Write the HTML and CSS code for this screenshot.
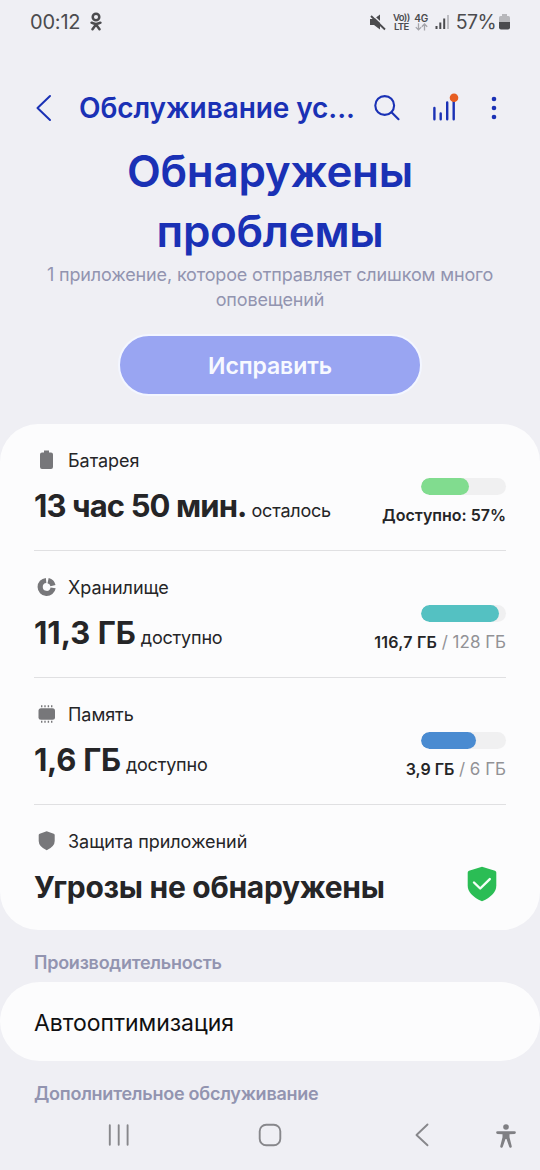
FILE: index.html
```
<!DOCTYPE html>
<html lang="ru">
<head>
<meta charset="utf-8">
<meta name="viewport" content="width=device-width">
<title>Обслуживание устройства</title>
<link rel="stylesheet" href="styles.css">
</head>
<body>
<div class="screen">
  <div class="status">
    <span class="clock">00:12</span>
    <svg class="ok" width="12" height="20" viewBox="0 0 12 20" fill="none" stroke="#4b4b4e" stroke-linecap="round"><circle cx="6" cy="5" r="3.3" stroke-width="2.5"/><path d="M1.6 10.7Q6 13.3 10.4 10.7M6 12.6L2.5 17.3M6 12.6l3.5 4.7" stroke-width="2.5"/></svg>
    <span class="spring"></span>
    <svg class="mute" width="16" height="17" viewBox="0 0 16 17"><path d="M0 5h4l6-4.500v15l-6-4.500H0z" fill="#4b4b4e"/><path d="M2 .5l14 13" stroke="#efeff4" stroke-width="1.500"/><path d="M1 2l14 13.500" stroke="#4b4b4e" stroke-width="1.900"/></svg>
    <span class="net volte"><b>Vo))</b><b>LTE</b></span>
    <span class="net fourg"><b>4G</b><svg width="13" height="8" viewBox="0 0 13 8" fill="none" stroke="#a5a5aa" stroke-width="1.3"><path d="M3.5.3v6.5M.8 4.1l2.7 2.8 2.7-2.8M9.5 7.5V1M6.8 3.8L9.5 1l2.7 2.8"/></svg></span>
    <svg class="signal" width="15" height="16" viewBox="0 0 15 16"><path d="M.5 12h2v3h-2zM4.3 8.500h2V15h-2zM8.200 4.500h2V15h-2z" fill="#4b4b4e"/><path d="M12 1h2v14h-2z" fill="#bdbdc2"/></svg>
    <span class="pct">57%</span>
    <svg class="batt" width="11" height="16" viewBox="0 0 11 16"><path d="M3 0h5v2h1.500Q11 2 11 4v4H0V4q0-2 1.500-2H3z" fill="#b7b7bb"/><path d="M0 8h11v5.500q0 2-2 2H2q-2 0-2-2z" fill="#4b4b4e"/></svg>
  </div>

  <header class="bar">
    <svg class="back" width="16" height="28" viewBox="0 0 16 28" fill="none" stroke="#1a31b5" stroke-width="2" stroke-linecap="round" stroke-linejoin="round"><path d="M14 2L1.500 14 14 26"/></svg>
    <h1>Обслуживание ус...</h1>
    <svg class="search" width="26" height="26" viewBox="0 0 26 26" fill="none" stroke="#1a31b5" stroke-width="2.100" stroke-linecap="round"><circle cx="10.700" cy="10.500" r="9.400"/><path d="M17.500 17.200l7 7"/></svg>
    <svg class="chart" width="28" height="28" viewBox="0 0 28 28"><path d="M2.400 15v11.300M8.700 20.500v5.800M15.200 9.500v16.800M21.700 7v19.300" stroke="#1a31b5" stroke-width="2.400" stroke-linecap="round"/><circle cx="22" cy="4.700" r="4.300" fill="#e75e22"/></svg>
    <svg class="more" width="6" height="24" viewBox="0 0 6 24" fill="#1a31b5"><circle cx="3" cy="3" r="2.300"/><circle cx="3" cy="12" r="2.300"/><circle cx="3" cy="21" r="2.300"/></svg>
  </header>

  <section class="hero">
    <h2>Обнаружены<br>проблемы</h2>
    <p>1 приложение, которое отправляет слишком много<br>оповещений</p>
    <button class="fix">Исправить</button>
  </section>

  <section class="card">
    <div class="row">
      <div class="info">
        <div class="label"><svg width="24" height="24" viewBox="0 0 24 24" fill="#77777a"><path d="M10 2.500h5v2h2q2 0 2 2v12.500q0 2-2 2h-9q-2 0-2-2V6.500q0-2 2-2h2z"/></svg>Батарея</div>
        <div class="value"><strong class="tight">13 час 50 мин.</strong><span class="after">осталось</span></div>
      </div>
      <div class="usage"><div class="meter"><i class="green" style="width:57%"></i></div><div class="amount"><b>Доступно: 57%</b></div></div>
    </div>
    <div class="row">
      <div class="info">
        <div class="label"><svg width="24" height="24" viewBox="0 0 24 24" fill="none" stroke="#77777a" stroke-width="5.200"><path d="M12.100 5.500A6.500 6.500 0 1 0 19.100 12.900"/><path d="M14.100 5.600A6.500 6.500 0 0 1 19 10.600"/></svg>Хранилище</div>
        <div class="value"><strong>11,3 ГБ</strong><span>доступно</span></div>
      </div>
      <div class="usage"><div class="meter"><i class="teal" style="width:92%"></i></div><div class="amount"><b class="wide">116,7 ГБ</b> <span>/ 128 ГБ</span></div></div>
    </div>
    <div class="row">
      <div class="info">
        <div class="label"><svg width="24" height="24" viewBox="0 0 24 24" fill="#77777a"><rect x="4.500" y="6.200" width="16.500" height="11.600" rx="2.500"/><path d="M7.700 3.200v2M11 3.200v2M14.400 3.200v2M17.700 3.200v2M7.700 18.800v2M11 18.800v2M14.400 18.800v2M17.700 18.800v2" stroke="#77777a" stroke-width="1.400"/></svg>Память</div>
        <div class="value"><strong class="memory">1,6 ГБ</strong><span>доступно</span></div>
      </div>
      <div class="usage"><div class="meter"><i class="blue" style="width:64.500%"></i></div><div class="amount"><b>3,9 ГБ</b> <span>/ 6 ГБ</span></div></div>
    </div>
    <div class="row">
      <div class="info">
        <div class="label"><svg width="24" height="24" viewBox="0 0 24 24" fill="#77777a"><path d="M12.700 2.300l7 2.400q1 .3 1 1.300v6q0 5.500-8 9.300-8-3.800-8-9.300v-6q0-1 1-1.300z"/></svg>Защита приложений</div>
        <div class="value"><strong class="threat">Угрозы не обнаружены</strong></div>
      </div>
      <svg class="shield" width="30" height="36" viewBox="0 0 30 36"><path d="M15 .7L28 4.800q1.300.5 1.300 2v12.700Q29.300 29 15 35.300.7 29 .7 19.500V6.800q0-1.500 1.300-2z" fill="#2bbd55"/><path d="M7 16.500l6.200 6 9.600-9.400" fill="none" stroke="#f4fff6" stroke-width="2.400" stroke-linecap="round" stroke-linejoin="round"/></svg>
    </div>
  </section>

  <h3>Производительность</h3>
  <section class="single">Автооптимизация</section>
  <h3 class="extra">Дополнительное обслуживание</h3>

  <nav>
    <svg class="recent" width="22" height="22" viewBox="0 0 22 22" stroke="#87878b" stroke-width="1.900" stroke-linecap="round"><path d="M1.800 1.300v19.400M10.700 1.300v19.400M19.600 1.300v19.400"/></svg>
    <svg class="home" width="24" height="24" viewBox="0 0 24 24" fill="none" stroke="#87878b" stroke-width="1.900"><rect x="1.700" y="1.700" width="20.600" height="20.600" rx="6.500"/></svg>
    <svg class="prev" width="14" height="24" viewBox="0 0 14 24" fill="none" stroke="#87878b" stroke-width="1.900" stroke-linecap="round" stroke-linejoin="round"><path d="M12.500 1.500L1.500 12l11 10.300"/></svg>
    <svg class="access" width="20" height="24" viewBox="0 0 20 24" fill="#7f7f83"><circle cx="10" cy="3" r="2.800"/><path d="M1.500 7.200h17a1.300 1.300 0 0 1 0 2.700l-5 .4v3l2.200 8.700a1.300 1.300 0 0 1-2.500.8L10.500 15h-1l-2.700 7.800a1.300 1.300 0 0 1-2.500-.8l2.200-8.700v-3l-5-.4a1.300 1.300 0 0 1 0-2.700z"/></svg>
  </nav>
</div>
</body>
</html>
```
FILE: styles.css
```
* { box-sizing: border-box; margin: 0; padding: 0; }
body { background: #efeff4; font-family: Inter, "Noto Sans", sans-serif; color: #252527; }
svg { display: block; flex: none; }
.screen { width: 540px; height: 1170px; overflow: hidden; display: flex; flex-direction: column; background: #efeff4; }
.screen > * { flex: none; }

.status { height: 44px; display: flex; align-items: center; padding: 0 30px; color: #4b4b4e; }
.clock { font-size: 20px; line-height: 44px; letter-spacing: -0.2px; }
.ok { margin-left: 10px; }
.spring { flex: 1; }
.mute { margin-right: 7px; }
.net { display: flex; flex-direction: column; align-items: center; width: 17px; font-size: 9.500px; line-height: 9px; }
.net b { font-weight: 600; white-space: nowrap; }
.volte { letter-spacing: -0.6px; margin-right: 5px; }
.fourg { width: 13px; font-size: 10px; margin-right: 7px; }
.signal { margin-right: 6px; }
.pct { font-size: 19.500px; letter-spacing: -0.600px; margin-right: 3px; }

.bar { height: 98px; display: flex; align-items: flex-start; padding: 30px 42px 0 36px; }
.bar svg { margin-top: 20px; }
.bar h1 { width: 276px; margin-left: 27px; font-size: 28px; line-height: 69px; font-weight: 600; letter-spacing: -0.080px; white-space: nowrap; color: #1a31b5; }
.bar .search { margin-left: 19px; margin-top: 21px; }
.bar .chart { margin-left: 32px; margin-top: 19px; }
.bar .more { margin-left: 31px; margin-top: 22px; }

.hero { height: 282px; display: flex; flex-direction: column; align-items: center; text-align: center; }
.hero h2 { margin-top: -1px; font-size: 44px; line-height: 60px; font-weight: 600; letter-spacing: -0.300px; color: #1a31b5; }
.hero p { margin-top: 1px; font-size: 18px; line-height: 25px; letter-spacing: -0.150px; color: #9294b0; }
.fix { width: 304px; height: 62px; margin-top: 22px; border: 2px solid #f3f6ff; border-radius: 31px; background: #99a5f2; color: #f7f9ff; font: 600 23px/58px Inter, sans-serif; letter-spacing: -0.100px; padding-top: 1px; }

.card { height: 506px; border-radius: 38px; background: #fcfcfd; padding: 0 34px; }
.row { height: 127px; display: flex; justify-content: space-between; border-bottom: 1.500px solid #e0e0e2; }
.row:last-child { border-bottom: 0; }
.info { padding-top: 24px; }
.label { display: flex; align-items: center; gap: 10px; height: 24px; font-size: 18px; letter-spacing: -0.050px; }
.value { height: 46px; margin-top: 11px; display: flex; align-items: baseline; gap: 5px; line-height: 46px; white-space: nowrap; }
.value strong { font-size: 31px; font-weight: 700; }
.value .tight { letter-spacing: -0.900px; }
.value .threat { font-size: 30px; letter-spacing: -0.300px; }
.value .memory { letter-spacing: -0.250px; }
.value span { font-size: 18px; letter-spacing: -0.200px; }
.usage { display: flex; flex-direction: column; align-items: flex-end; padding-top: 54px; }
.meter { width: 85px; height: 17px; border-radius: 9px; background: #f0f0f1; overflow: hidden; }
.meter i { display: block; height: 17px; border-radius: 9px; }
.green { background: #81dc8f; }
.teal { background: #54c1c2; }
.blue { background: #4a8bd1; }
.amount { margin-top: 8px; font-size: 16px; line-height: 24px; white-space: nowrap; }
.amount b { font-weight: 600; }
.amount .wide { letter-spacing: 0.250px; }
.amount span { font-size: 17px; color: #929296; }
.shield { margin: 61px 9px 0 0; }

h3 { height: 52px; padding-left: 34px; padding-top: 7px; font-size: 18px; line-height: 52px; font-weight: 600; letter-spacing: -0.250px; color: #9294b0; }
.single { height: 79px; border-radius: 39.500px; background: #fcfcfd; padding-left: 34px; font-size: 23px; line-height: 82px; letter-spacing: -0.050px; color: #101011; }
.extra { height: 50px; }

nav { height: 59px; display: flex; align-items: flex-start; padding: 0 24px 0 108px; }
.recent { margin-top: 13px; }
.home { margin: 12px 0 0 128px; }
.prev { margin: 12px 0 0 133px; }
.access { margin: 13px 0 0 auto; }
```
